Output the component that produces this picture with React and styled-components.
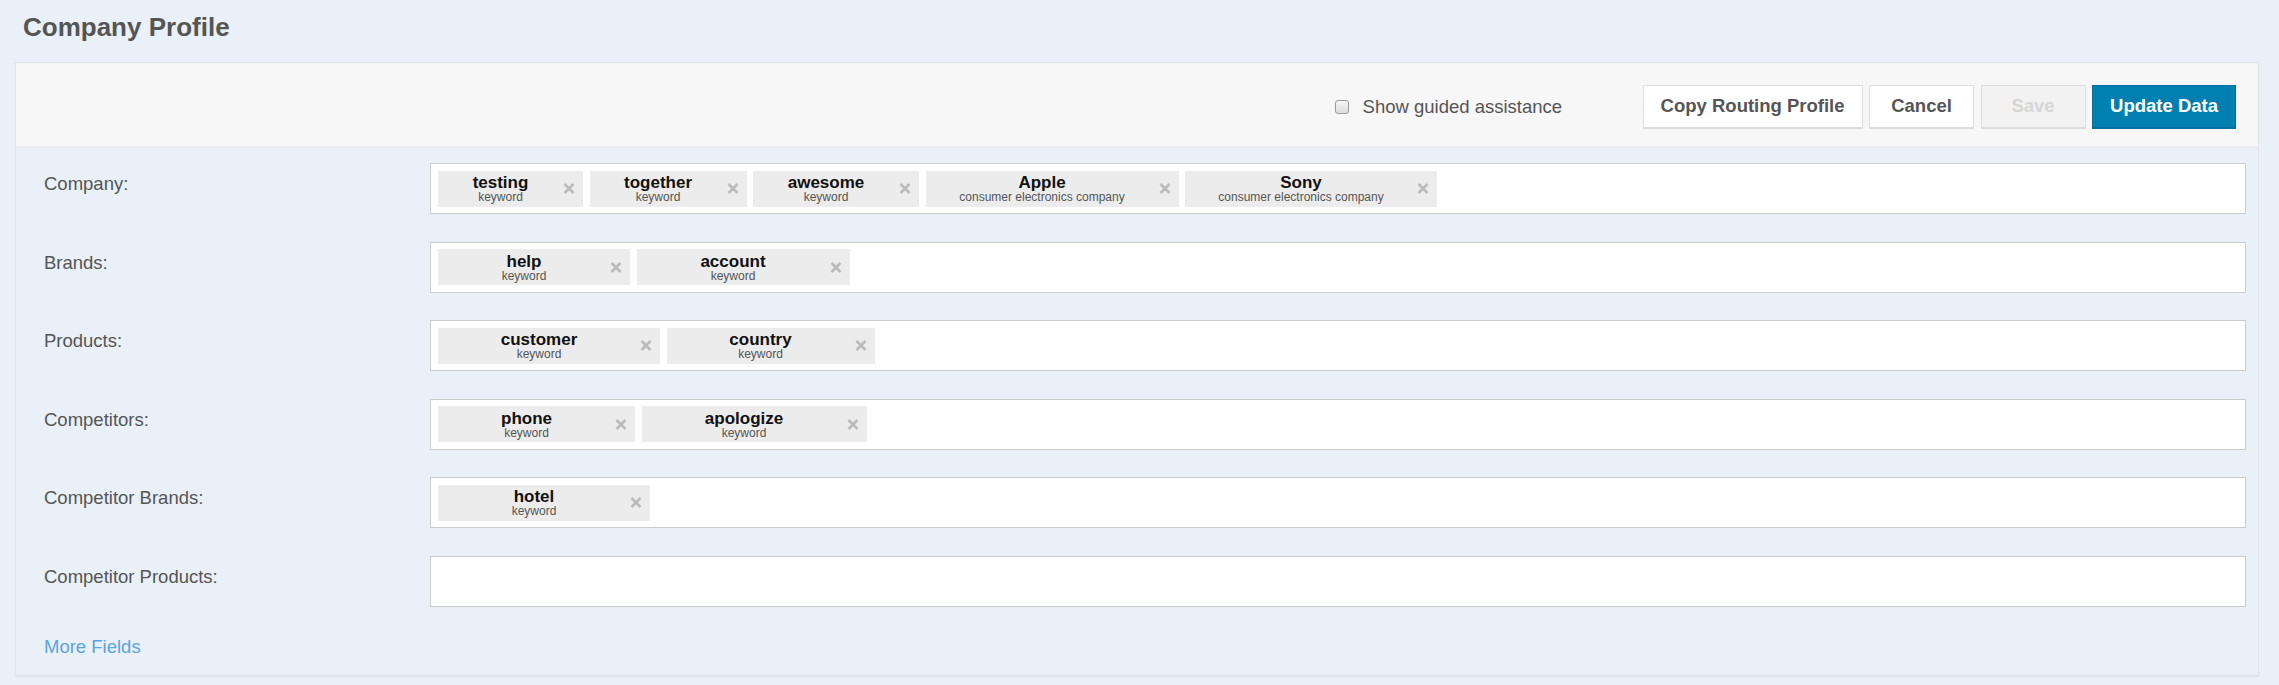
import React from "react";
import styled, { createGlobalStyle } from "styled-components";

const GlobalStyle = createGlobalStyle`
  html, body {
    margin: 0;
    padding: 0;
    background: #e9f0f7;
  }
  body {
    font-family: "Liberation Sans", Arial, sans-serif;
    color: #555;
  }
`;

const Page = styled.div`
  padding: 9px 20px 0 15px;
  min-height: 685px;
  box-sizing: border-box;
`;

const Title = styled.h1`
  margin: 0 0 17px 8px;
  font-size: 26px;
  line-height: 36px;
  font-weight: bold;
  color: #555;
`;

const Card = styled.div`
  border: 1px solid #dde4eb;
  box-shadow: 0 1px 1px rgba(0, 0, 0, 0.04);
`;

const Toolbar = styled.div`
  display: flex;
  align-items: center;
  justify-content: flex-end;
  height: 85px;
  box-sizing: border-box;
  padding: 4px 22px 0 0;
  background: #f7f7f7;
  border-bottom: 2px solid #ececec;
`;

const Guided = styled.label`
  display: flex;
  align-items: center;
  gap: 14px;
  margin-right: 74px;
  font-size: 18.5px;
  color: #555;
`;

const Check = styled.input`
  appearance: none;
  margin: 0;
  width: 14px;
  height: 14px;
  border: 1px solid #9a9a9a;
  border-radius: 3px;
  background: linear-gradient(#f4f4f4, #dedede);
  box-sizing: border-box;
`;

const Button = styled.button`
  height: 44px;
  min-width: 105px;
  margin-left: 6.5px;
  padding: 0 17px;
  box-sizing: border-box;
  font-family: "Liberation Sans", Arial, sans-serif;
  font-size: 18.5px;
  font-weight: bold;
  border: 1px solid ${(p) => (p.$primary ? "#00719e" : "#dddddd")};
  border-bottom-width: 2px;
  background: ${(p) => (p.$primary ? "#007fb1" : p.disabled ? "#f2f2f2" : "#ffffff")};
  color: ${(p) => (p.$primary ? "#ffffff" : p.disabled ? "#d6d6d6" : "#555555")};
  cursor: ${(p) => (p.disabled ? "default" : "pointer")};
`;

const Body = styled.div`
  display: flex;
  flex-direction: column;
  gap: 27.6px;
  padding: 15px 12px 15px 28px;
`;

const Row = styled.div`
  display: flex;
  align-items: flex-start;
`;

const Label = styled.div`
  width: 386px;
  flex: none;
  padding-top: 7px;
  font-size: 18.5px;
  line-height: 27px;
  color: #555;
`;

const TagBox = styled.div`
  flex: 1;
  display: flex;
  align-items: center;
  gap: 6.5px;
  height: 51px;
  box-sizing: border-box;
  padding: 0 7px;
  background: #ffffff;
  border: 1px solid #cccccc;
`;

const Tag = styled.div`
  display: flex;
  align-items: center;
  height: 36px;
  width: ${(p) => p.$width}px;
  flex: none;
  background: #ececec;
`;

const TagText = styled.div`
  flex: 1;
  text-align: center;
`;

const TagName = styled.div`
  font-size: 17px;
  line-height: 17px;
  font-weight: bold;
  color: #111;
`;

const TagKind = styled.div`
  font-size: 12px;
  line-height: 12px;
  color: #555;
`;

const Remove = styled.svg`
  width: 12px;
  height: 11px;
  margin-right: 8px;
  flex: none;
`;

const MoreLink = styled.a`
  display: block;
  margin-top: -1.6px;
  font-size: 18.5px;
  line-height: 27px;
  color: #5aa5dc;
  text-decoration: none;
`;

const fields = [
  {
    label: "Company:",
    tags: [
      { name: "testing", kind: "keyword", width: 145 },
      { name: "together", kind: "keyword", width: 157 },
      { name: "awesome", kind: "keyword", width: 166 },
      { name: "Apple", kind: "consumer electronics company", width: 253 },
      { name: "Sony", kind: "consumer electronics company", width: 252 },
    ],
  },
  {
    label: "Brands:",
    tags: [
      { name: "help", kind: "keyword", width: 192 },
      { name: "account", kind: "keyword", width: 213 },
    ],
  },
  {
    label: "Products:",
    tags: [
      { name: "customer", kind: "keyword", width: 222 },
      { name: "country", kind: "keyword", width: 208 },
    ],
  },
  {
    label: "Competitors:",
    tags: [
      { name: "phone", kind: "keyword", width: 197 },
      { name: "apologize", kind: "keyword", width: 225 },
    ],
  },
  {
    label: "Competitor Brands:",
    tags: [{ name: "hotel", kind: "keyword", width: 212 }],
  },
  { label: "Competitor Products:", tags: [] },
];

function RemoveIcon() {
  return (
    <Remove viewBox="0 0 12 11">
      <path d="M1.5 1 L10.5 10 M10.5 1 L1.5 10" stroke="#bbbbbb" strokeWidth="2.6" />
    </Remove>
  );
}

function FieldRow({ field }) {
  return (
    <Row>
      <Label>{field.label}</Label>
      <TagBox>
        {field.tags.map((t) => (
          <Tag key={t.name} $width={t.width}>
            <TagText>
              <TagName>{t.name}</TagName>
              <TagKind>{t.kind}</TagKind>
            </TagText>
            <RemoveIcon />
          </Tag>
        ))}
      </TagBox>
    </Row>
  );
}

export default function App() {
  return (
    <>
      <GlobalStyle />
      <Page>
        <Title>Company Profile</Title>
        <Card>
          <Toolbar>
            <Guided>
              <Check type="checkbox" />
              Show guided assistance
            </Guided>
            <Button>Copy Routing Profile</Button>
            <Button>Cancel</Button>
            <Button disabled>Save</Button>
            <Button $primary>Update Data</Button>
          </Toolbar>
          <Body>
            {fields.map((f) => (
              <FieldRow key={f.label} field={f} />
            ))}
            <MoreLink href="#">More Fields</MoreLink>
          </Body>
        </Card>
      </Page>
    </>
  );
}
